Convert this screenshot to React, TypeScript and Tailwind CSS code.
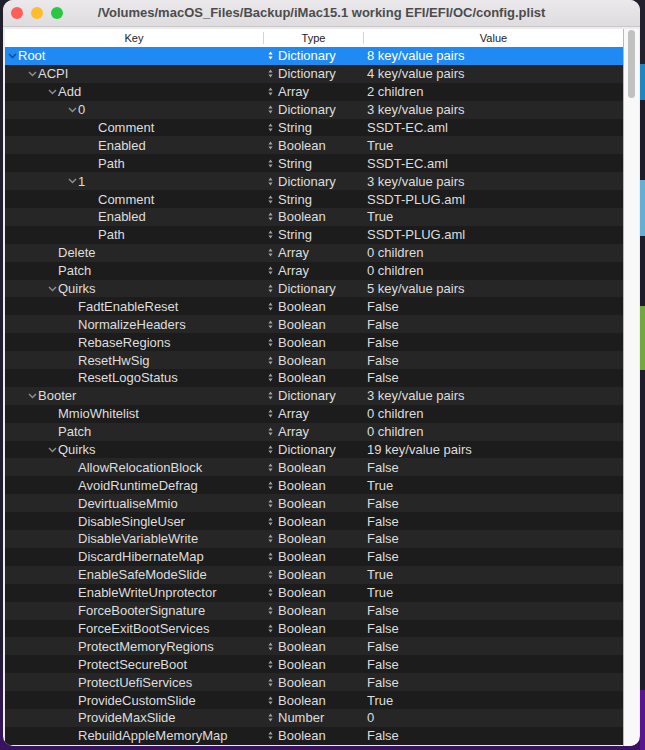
import React from "react";

type Row = [number, string, string, string, boolean?];

const rows: Row[] = [
  [0, "Root", "Dictionary", "8 key/value pairs", true],
  [1, "ACPI", "Dictionary", "4 key/value pairs", true],
  [2, "Add", "Array", "2 children", true],
  [3, "0", "Dictionary", "3 key/value pairs", true],
  [4, "Comment", "String", "SSDT-EC.aml"],
  [4, "Enabled", "Boolean", "True"],
  [4, "Path", "String", "SSDT-EC.aml"],
  [3, "1", "Dictionary", "3 key/value pairs", true],
  [4, "Comment", "String", "SSDT-PLUG.aml"],
  [4, "Enabled", "Boolean", "True"],
  [4, "Path", "String", "SSDT-PLUG.aml"],
  [2, "Delete", "Array", "0 children"],
  [2, "Patch", "Array", "0 children"],
  [2, "Quirks", "Dictionary", "5 key/value pairs", true],
  [3, "FadtEnableReset", "Boolean", "False"],
  [3, "NormalizeHeaders", "Boolean", "False"],
  [3, "RebaseRegions", "Boolean", "False"],
  [3, "ResetHwSig", "Boolean", "False"],
  [3, "ResetLogoStatus", "Boolean", "False"],
  [1, "Booter", "Dictionary", "3 key/value pairs", true],
  [2, "MmioWhitelist", "Array", "0 children"],
  [2, "Patch", "Array", "0 children"],
  [2, "Quirks", "Dictionary", "19 key/value pairs", true],
  [3, "AllowRelocationBlock", "Boolean", "False"],
  [3, "AvoidRuntimeDefrag", "Boolean", "True"],
  [3, "DevirtualiseMmio", "Boolean", "False"],
  [3, "DisableSingleUser", "Boolean", "False"],
  [3, "DisableVariableWrite", "Boolean", "False"],
  [3, "DiscardHibernateMap", "Boolean", "False"],
  [3, "EnableSafeModeSlide", "Boolean", "True"],
  [3, "EnableWriteUnprotector", "Boolean", "True"],
  [3, "ForceBooterSignature", "Boolean", "False"],
  [3, "ForceExitBootServices", "Boolean", "False"],
  [3, "ProtectMemoryRegions", "Boolean", "False"],
  [3, "ProtectSecureBoot", "Boolean", "False"],
  [3, "ProtectUefiServices", "Boolean", "False"],
  [3, "ProvideCustomSlide", "Boolean", "True"],
  [3, "ProvideMaxSlide", "Number", "0"],
  [3, "RebuildAppleMemoryMap", "Boolean", "False"],
];

// indent per outline level
const indent = ["pl-[2px]", "pl-[22px]", "pl-[42px]", "pl-[62px]", "pl-[82px]"];

const Chevron = ({ className }: { className: string }) => (
  <svg width="9" height="6" viewBox="0 0 9 6" className={className}>
    <polyline points="1,1 4.5,4.6 8,1" fill="none" stroke="currentColor" strokeWidth="1.4" />
  </svg>
);

const UpDown = ({ className }: { className: string }) => (
  <svg width="5" height="9" viewBox="0 0 5 9" className={className}>
    <path d="M2.5 0.6 L4.6 3.6 L0.4 3.6 Z M2.5 8.4 L4.6 5.4 L0.4 5.4 Z" fill="currentColor" />
  </svg>
);

const PlistRow = ({ row, index }: { row: Row; index: number }) => {
  const [level, key, type, value, open] = row;
  const selected = index === 0;
  const bg = selected ? "bg-[#1f8af3]" : index % 2 === 0 ? "bg-[#1c1c1c]" : "bg-[#262626]";
  return (
    <div className={`flex flex-1 min-h-0 items-center text-[13px] leading-none ${bg} ${selected ? "text-white" : "text-[#dedede]"}`}>
      <div className={`w-[258px] flex items-center ${indent[level]}`}>
        <span className="w-[11px] flex justify-center">
          {open && <Chevron className={selected ? "text-[#0b4a8c]" : "text-[#8f8f8f]"} />}
        </span>
        <span>{key}</span>
      </div>
      <div className="w-[100px] flex items-center pl-[5px] gap-[5px]">
        <UpDown className={selected ? "text-white" : "text-[#a3a3a3]"} />
        <span>{type}</span>
      </div>
      <div className="flex-1 pl-[4px]">{value}</div>
    </div>
  );
};

export default function App() {
  return (
    <div
      className="w-[645px] h-[750px] flex bg-[linear-gradient(to_bottom,#211f2b_0%,#1f1c2e_85%,#3a1263_100%)] overflow-hidden"
      style={{ fontFamily: '"Liberation Sans", Arial, sans-serif' }}
    >
      <div className="ml-[3px] w-[637px] h-[746px] flex flex-col bg-[#ececec] rounded-[10px] overflow-hidden">
        {/* title bar */}
        <div className="h-[27px] grid grid-cols-[72px_1fr_72px] items-center bg-[linear-gradient(to_bottom,#ebe9eb,#dedcde)] border-b border-[#c9c7c9]">
          <div className="flex items-center gap-[8px] pl-[8px]">
            <span className="w-[12px] h-[12px] rounded-full bg-[#fe5f57]" />
            <span className="w-[12px] h-[12px] rounded-full bg-[#febc2e]" />
            <span className="w-[12px] h-[12px] rounded-full bg-[#28c840]" />
          </div>
          <div className="text-center text-[13px] font-bold text-[#4c4c4c] whitespace-nowrap">
            /Volumes/macOS_Files/Backup/iMac15.1 working EFI/EFI/OC/config.plist
          </div>
          <div />
        </div>

        <div className="flex flex-1 pt-[2px] pl-[2px]">
          {/* table */}
          <div className="w-[619px] flex flex-col border-r border-[#b9b9b9]">
            <div className="h-[18px] flex items-center bg-white text-[11px] text-[#222]">
              <div className="w-[258px] text-center">Key</div>
              <div className="w-px h-[12px] bg-[#d4d4d4]" />
              <div className="w-[99px] text-center">Type</div>
              <div className="w-px h-[12px] bg-[#d4d4d4]" />
              <div className="flex-1 text-center">Value</div>
            </div>
            <div className="h-[698px] flex flex-col">
              {rows.map((r, i) => (
                <PlistRow key={i} row={r} index={i} />
              ))}
            </div>
          </div>
          {/* scrollbar */}
          <div className="w-[15px] bg-[#f8f8f8] pt-[1px]">
            <div className="ml-[4px] w-[7px] h-[68px] rounded-full bg-[#c1c1c1]" />
          </div>
        </div>
      </div>

      {/* desktop peeking through on the right */}
      <div className="w-[5px] flex flex-col">
        <div className="h-[64px] bg-[#23212d]" />
        <div className="h-[36px] bg-[#1f86c2]" />
        <div className="h-[80px] bg-[#1e1c28]" />
        <div className="h-[56px] bg-[#67aed6]" />
        <div className="h-[70px] bg-[#1e1c28]" />
        <div className="h-[64px] bg-[#71a93f]" />
        <div className="h-[320px] bg-[#1f1c2b]" />
        <div className="flex-1 bg-[#5a1490]" />
      </div>
    </div>
  );
}
